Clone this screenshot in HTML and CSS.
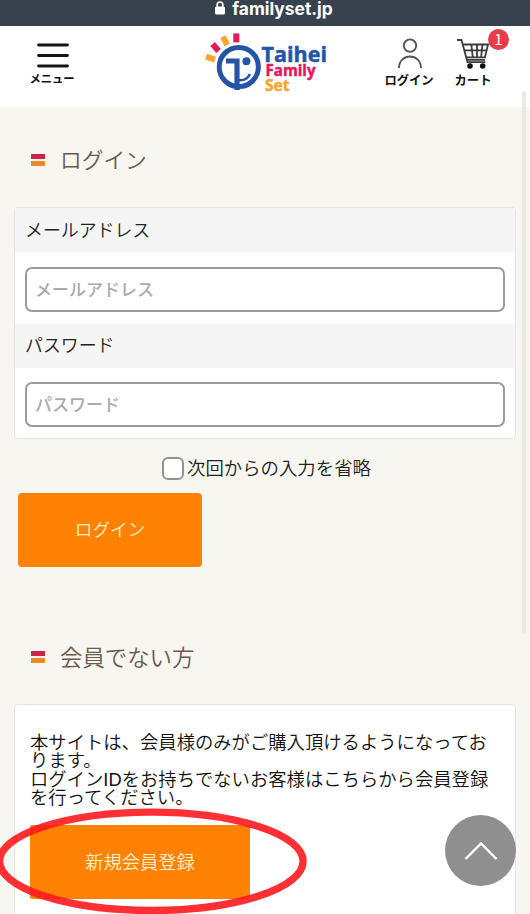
FILE: index.html
```
<!DOCTYPE html>
<html lang="ja">
<head>
<meta charset="utf-8">
<title>ログイン</title>
<link rel="stylesheet" href="styles.css">
</head>
<body>
<div class="address-bar">
  <svg class="lock" width="10" height="14" viewBox="0 0 10 14"><rect y="5.500" width="10" height="8" rx="1.5" fill="#fff"/><path d="M2.2 7V3.800a2.8 2.8 0 0 1 5.6 0V7" fill="none" stroke="#fff" stroke-width="1.6"/></svg>
  <span>familyset.jp</span>
</div>
<header class="header">
  <a class="nav menu">
    <svg width="32" height="26" viewBox="0 0 32 26"><path d="M1.500 2h29M1.500 12.500h29M1.500 23h29" stroke="#151515" stroke-width="2.800" stroke-linecap="round"/></svg>
    <span>メニュー</span>
  </a>
  <svg class="logo" width="126" height="62" viewBox="204 32 126 62">
    <g stroke-width="6">
      <path d="M206 56.600l9 3" stroke="#f6a531"/>
      <path d="M212.600 44l6 7" stroke="#e5185d"/>
      <path d="M223 36.600l4.200 8.200" stroke="#f6a531"/>
      <path d="M236.300 33.400v9" stroke="#e5185d"/>
    </g>
    <g fill="none" stroke="#2455a6">
      <circle cx="238.800" cy="67" r="19.600" stroke-width="5"/>
      <path d="M226 61h11v29" stroke-width="5.200"/>
      <path d="M239 80.200c5 .4 9-2 11-6.200" stroke-width="2.600"/>
    </g>
    <circle cx="246.400" cy="61.200" r="4" fill="#2455a6"/>
    <g class="wordmark">
      <text x="261.500" y="62" font-size="22" textLength="65.500" lengthAdjust="spacingAndGlyphs" fill="#2455a6" stroke="#2455a6">Taihei</text>
      <text x="265.500" y="76" font-size="15.500" textLength="50" lengthAdjust="spacingAndGlyphs" fill="#e5185d" stroke="#e5185d">Family</text>
      <text x="265" y="90.500" font-size="15.500" textLength="24.500" lengthAdjust="spacingAndGlyphs" fill="#f6a531" stroke="#f6a531">Set</text>
    </g>
  </svg>
  <a class="nav login">
    <svg width="26" height="32" viewBox="-1 0 26 32" fill="none" stroke="#555" stroke-width="1.900"><circle cx="13" cy="7.600" r="6.200"/><path d="M2 30C2 14.600 24 14.600 24 30"/></svg>
    <span>ログイン</span>
  </a>
  <a class="nav cart">
    <svg width="34" height="32" viewBox="0 0 34 32" fill="none"><path d="M1 2h4.500l6 22.200h17.800M7.500 6.500H32l-3 12.800H10.500M9 12.300h21.500M15.300 6.500l1.500 12.800M21 6.500v12.800M26.500 6.500l-1.400 12.800M11.500 21.800h17.500" stroke="#3c3c3c" stroke-width="1.800"/><circle cx="14" cy="28" r="2.800" fill="#111"/><circle cx="26.700" cy="28" r="2.800" fill="#111"/></svg>
    <span>カート</span>
    <b class="badge">1</b>
  </a>
</header>
<main class="main">
  <h1 class="heading"><i class="mark"></i><span>ログイン</span></h1>
  <form class="card form">
    <label class="label">メールアドレス</label>
    <div class="field"><input class="input" type="text" placeholder="メールアドレス"></div>
    <label class="label">パスワード</label>
    <div class="field"><input class="input" type="password" placeholder="パスワード"></div>
  </form>
  <label class="remember"><input class="check" type="checkbox"><span>次回からの入力を省略</span></label>
  <button class="button submit">ログイン</button>
  <h2 class="heading second"><i class="mark"></i><span>会員でない方</span></h2>
  <section class="card join">
    <p class="copy">本サイトは、会員様のみがご購入頂けるようになってお<br>ります。<br>ログインIDをお持ちでないお客様はこちらから会員登録<br>を行ってください。</p>
    <button class="button register">新規会員登録</button>
  </section>
</main>
<div class="scrollbar"></div>
<svg class="ring" width="310" height="110" viewBox="0 804 310 110"><ellipse cx="151.300" cy="861.300" rx="151.800" ry="49.200" fill="none" stroke="#ff1a1e" stroke-opacity=".9" stroke-width="7.400"/></svg>
<a class="to-top"><svg width="34" height="20" viewBox="0 0 34 20"><path d="M1.500 18L17 2.500 32.500 18" fill="none" stroke="#fff" stroke-width="2.400"/></svg></a>
</body>
</html>
```
FILE: styles.css
```
* { box-sizing: border-box; }
body {
  margin: 0;
  height: 914px;
  overflow: hidden;
  position: relative;
  background: #f8f6f1;
  color: #222;
  font-family: "Liberation Sans", "Noto Sans CJK JP", sans-serif;
}
.address-bar {
  height: 26px;
  background: #38424f;
  color: #fff;
  display: flex;
  justify-content: center;
  gap: 7px;
  padding-left: 18px;
  font: bold 17.400px/17px Inter, sans-serif;
}
.lock { margin-top: 1px; }
.header {
  height: 81px;
  background: #fff;
  display: flex;
  align-items: flex-start;
}
.nav {
  position: relative;
  display: flex;
  flex-direction: column;
  align-items: center;
  color: #111;
  font: bold 12.300px/16px "Noto Sans CJK JP", sans-serif;
  white-space: nowrap;
}
.menu { width: 46px; margin: 17px 0 0 29px; font-size: 11.300px; }
.menu span { margin-top: 1px; }
.menu svg { margin-left: 1px; }
.logo { margin: 6px 0 0 129px; }
.wordmark { font-family: "Open Sans", sans-serif; font-weight: 700; stroke-width: .5; }
.login { width: 50px; margin: 12px 0 0 54px; }
.login span, .cart span { margin-top: 2px; }
.cart { width: 38px; margin: 12px 0 0 20px; }
.badge {
  position: absolute;
  left: 34px;
  top: -9px;
  width: 21px;
  height: 21px;
  border-radius: 50%;
  background: #e73c4c;
  color: #fff;
  font: 15px/20px "Noto Sans CJK JP", sans-serif;
  text-align: center;
}
.main { height: 807px; overflow: hidden; padding: 37px 14px 0; }
.heading {
  margin: 0 0 31px;
  padding-left: 17px;
  height: 32px;
  display: flex;
  align-items: center;
  gap: 15px;
  color: #6b5a4e;
  font: 350 21.700px/30px "Noto Sans CJK JP", sans-serif;
}
.heading span { padding-bottom: 2px; }
.mark {
  width: 14px;
  height: 12px;
  border-top: 5px solid #cc2448;
  border-bottom: 5px solid #ed8a28;
}
.card {
  width: 502px;
  border: 1px solid #ebe4da;
  border-radius: 4px;
  background: #fff;
}
.form { height: 232px; }
.label {
  display: block;
  height: 45px;
  padding-left: 10px;
  background: #f5f5f5;
  font: 350 17.900px/43px "Noto Sans CJK JP", sans-serif;
}
.field { height: 70px; padding: 14px 10px 0; }
.input {
  display: block;
  width: 480px;
  height: 45px;
  padding: 0 8px 2px;
  border: 2px solid #9b9b9e;
  border-radius: 7px;
  background: #fff;
  font: 500 17px/24px "Noto Sans CJK JP", sans-serif;
}
.input::placeholder { color: #aaa; opacity: 1; }
.remember {
  height: 26px;
  margin: 16px 0 12px 148px;
  display: flex;
  align-items: center;
  gap: 3px;
  font: 350 18.400px/24px "Noto Sans CJK JP", sans-serif;
}
.remember span { padding-bottom: 2px; }
.check {
  appearance: none;
  width: 22px;
  height: 23px;
  margin: 1px 0 0;
  border: 2px solid #929295;
  border-radius: 6px;
  background: #fff;
}
.button {
  display: block;
  height: 74px;
  padding: 0 0 2px;
  border: 0;
  border-radius: 4px;
  background: #ff8205;
  color: #fff0c9;
  font: 350 18.300px/70px "Noto Sans CJK JP", sans-serif;
}
.submit { width: 184px; margin-left: 4px; font-size: 17.600px; }
.second { margin: 74px 0 31px; font-size: 22.400px; }
.join { height: 260px; padding: 29px 15px; }
.copy {
  margin: 0 0 18px;
  color: #111;
  font: 350 18.330px/18.300px "Liberation Sans", "Noto Sans CJK JP", sans-serif;
  white-space: nowrap;
}
.register { width: 220px; border-radius: 2px; }
.scrollbar {
  position: absolute;
  left: 522px;
  top: 91px;
  width: 4px;
  height: 542px;
  border-radius: 2px;
  background: #ebe9e5;
}
.ring { position: absolute; left: 0; top: 804px; }
.to-top {
  position: absolute;
  left: 445px;
  top: 815px;
  width: 71px;
  height: 71px;
  border-radius: 50%;
  background: #8f8f8f;
  display: flex;
  align-items: center;
  justify-content: center;
}
```
